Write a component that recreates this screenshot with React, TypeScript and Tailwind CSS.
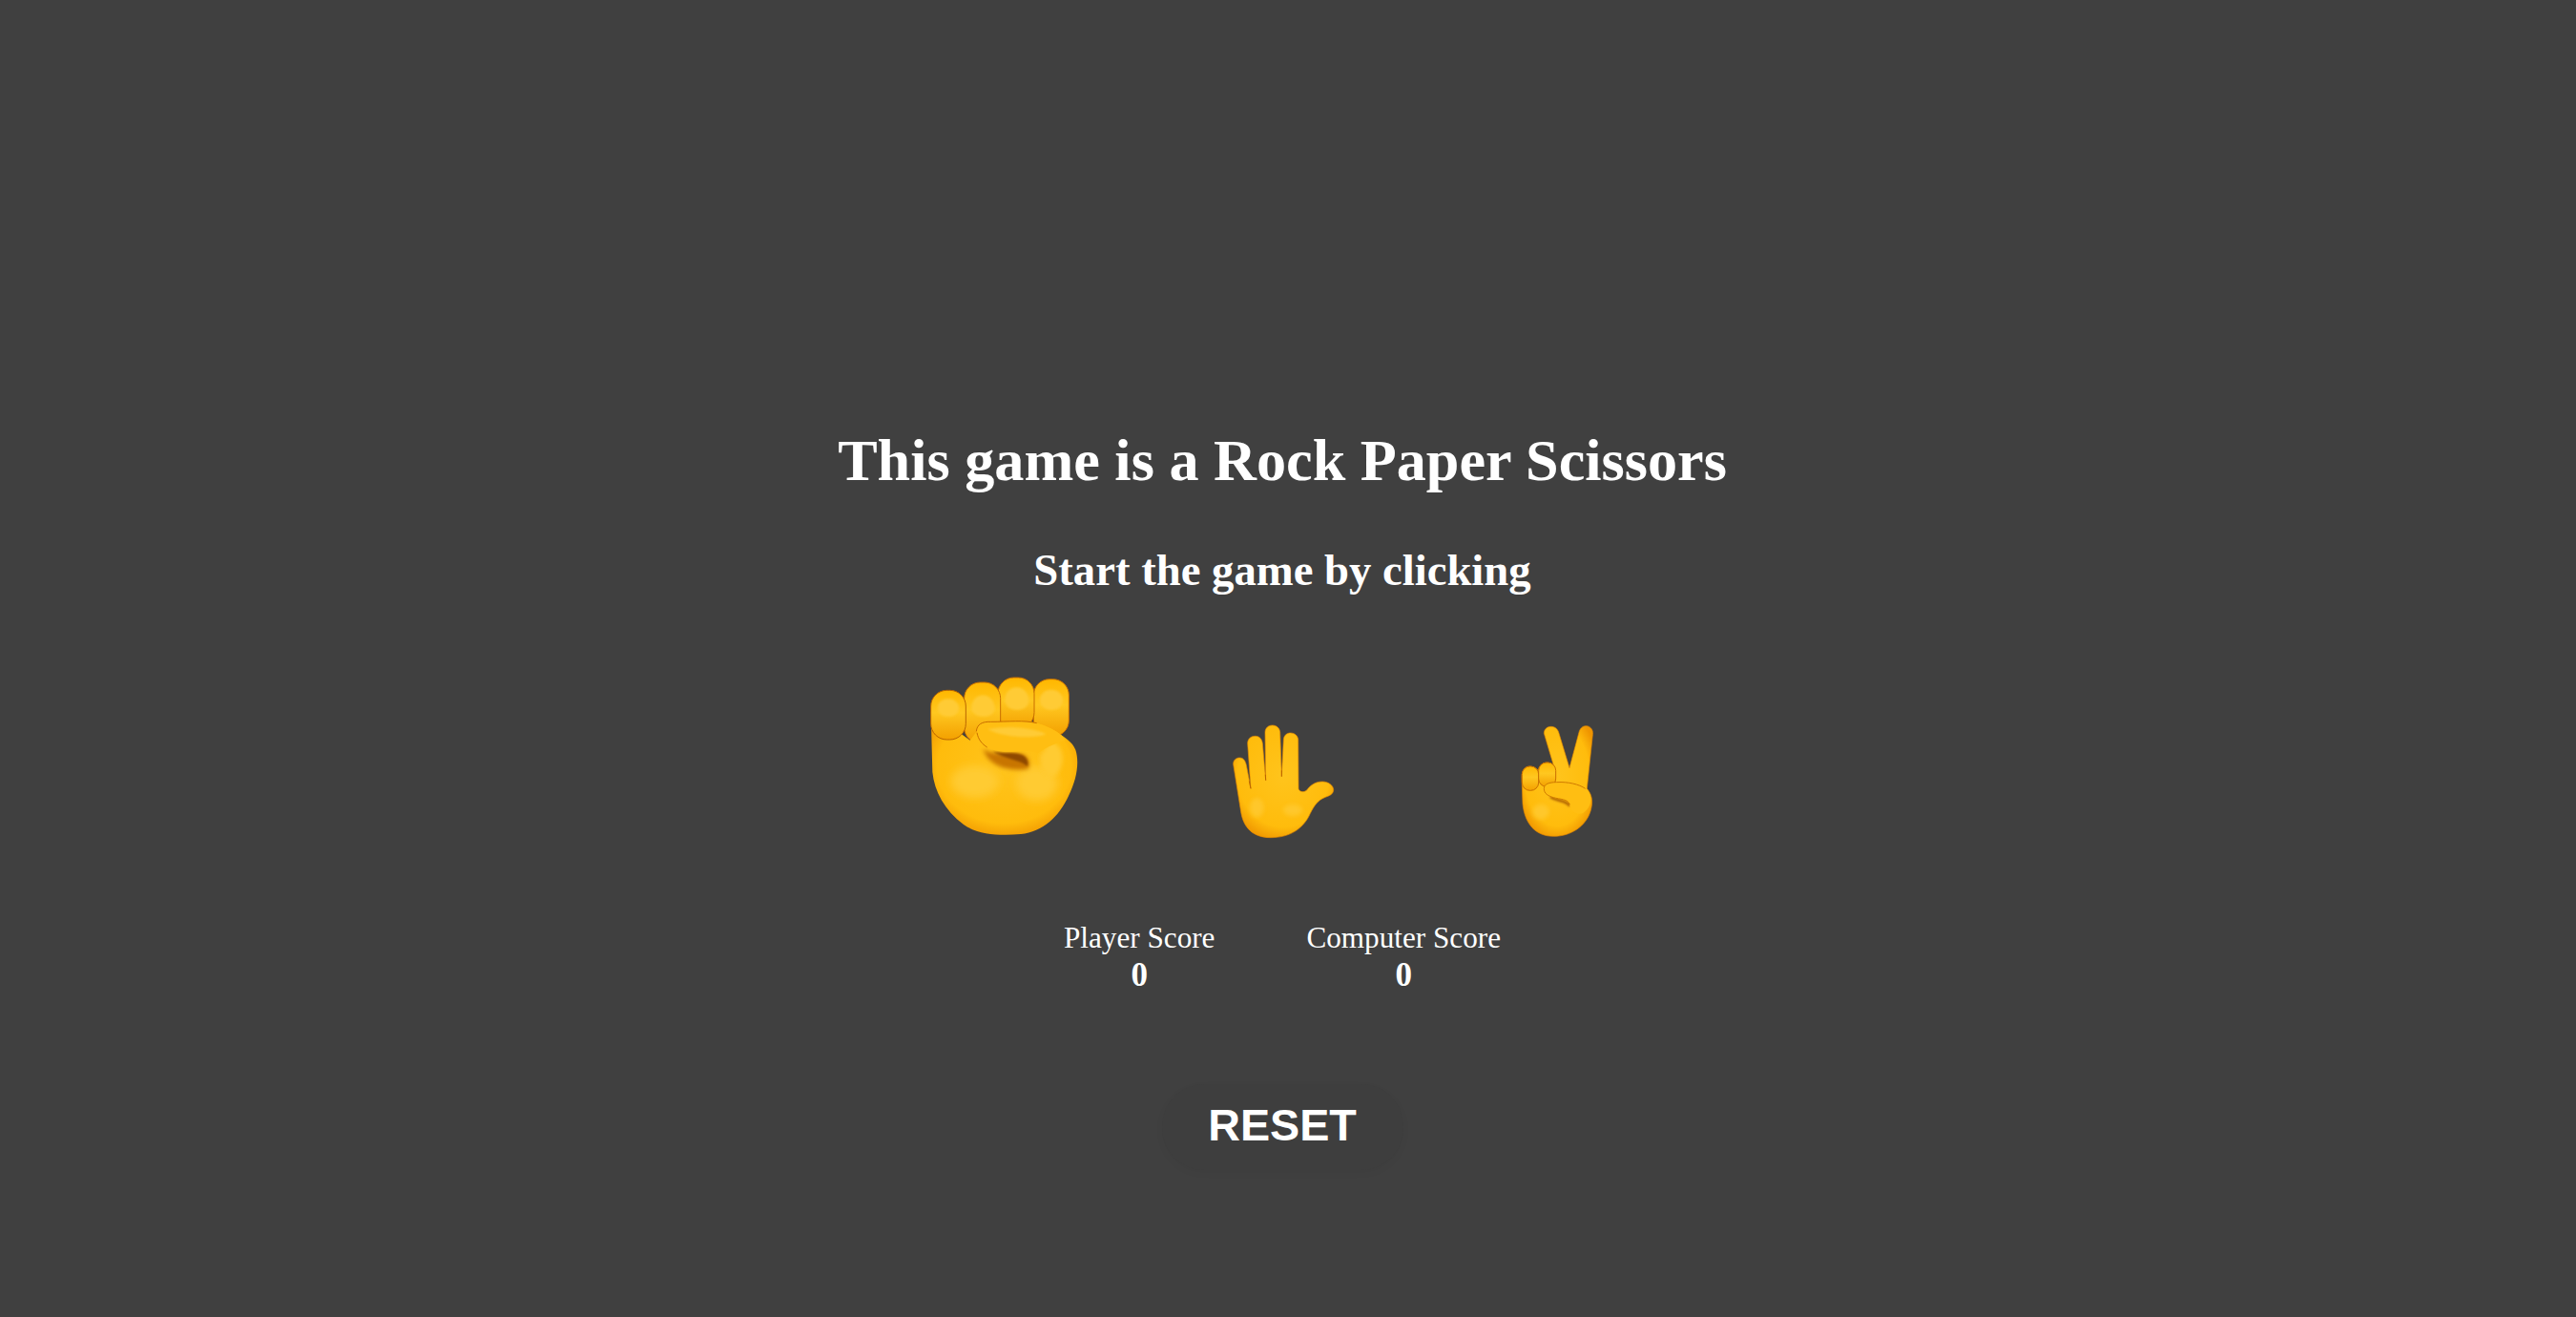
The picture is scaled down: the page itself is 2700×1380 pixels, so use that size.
const Defs = ({ id }: { id: string }) => (
  <defs>
    <radialGradient id={`${id}-skin`} cx="50%" cy="45%" r="60%">
      <stop offset="0%" stopColor="#ffc41c" />
      <stop offset="76%" stopColor="#ffbc0c" />
      <stop offset="100%" stopColor="#ef9500" />
    </radialGradient>
    <linearGradient id={`${id}-finger`} x1="0" y1="0" x2="0" y2="1">
      <stop offset="0%" stopColor="#ffb700" />
      <stop offset="45%" stopColor="#ffc720" />
      <stop offset="100%" stopColor="#f3a000" />
    </linearGradient>
    <filter id={`${id}-soft`} x="-40%" y="-40%" width="180%" height="180%">
      <feGaussianBlur stdDeviation="13" />
    </filter>
    <filter id={`${id}-mid`} x="-40%" y="-40%" width="180%" height="180%">
      <feGaussianBlur stdDeviation="7" />
    </filter>
    <filter id={`${id}-line`} x="-30%" y="-30%" width="160%" height="160%">
      <feGaussianBlur stdDeviation="3" />
    </filter>
  </defs>
);

const Fist = () => (
  <svg width="240" height="220" viewBox="0 0 720 660" className="shrink-0">
    <Defs id="fist" />
    <rect x="430" y="98" width="111" height="180" rx="50" fill="url(#fist-finger)" stroke="#c96f00" strokeWidth="3" />
    <rect x="318" y="93" width="114" height="160" rx="50" fill="url(#fist-finger)" stroke="#c96f00" strokeWidth="3" />
    <rect x="212" y="108" width="114" height="192" rx="50" fill="url(#fist-finger)" stroke="#c96f00" strokeWidth="3" />
    <path d="M340 165 C340 110 412 110 415 165 C415 205 342 205 340 165 Z" fill="#ffcb34" filter="url(#fist-line)" />
    <path d="M450 165 C450 120 520 120 522 165 C522 205 452 205 450 165 Z" fill="#ffcb34" filter="url(#fist-line)" />
    <path d="M235 190 C235 135 305 135 308 190 C308 225 238 225 235 190 Z" fill="#ffcb34" filter="url(#fist-line)" />
    <path
      d="M107 200 L112 390 C118 450 150 510 210 555 C250 585 320 592 390 585 C460 578 510 530 540 465 C565 415 575 360 562 320 C552 296 530 282 500 262 C470 245 440 232 400 232 L295 232 C268 232 252 245 252 262 L230 290 Z"
      fill="url(#fist-skin)"
    />
    <rect x="107" y="133" width="110" height="155" rx="50" fill="url(#fist-finger)" stroke="#b96400" strokeWidth="3" />
    <path d="M128 190 C128 150 195 150 195 190 C195 225 130 225 128 190 Z" fill="#ffcb34" filter="url(#fist-line)" />
    <ellipse cx="245" cy="420" rx="75" ry="50" fill="#ffcb30" filter="url(#fist-soft)" />
    <ellipse cx="440" cy="425" rx="65" ry="55" fill="#ffcb30" filter="url(#fist-soft)" />
    <path d="M485 290 C530 310 530 370 500 400 C470 420 450 380 450 340 Z" fill="#ffcb30" filter="url(#fist-mid)" />
    <path
      d="M270 318 C320 345 375 322 404 338 C420 350 418 372 412 380 C375 385 320 385 285 345 Z"
      fill="#c87400"
      filter="url(#fist-mid)"
    />
    <path d="M300 325 C340 335 380 325 400 340 C412 350 414 362 411 372 C390 352 340 350 300 325 Z" fill="#8f4a00" filter="url(#fist-line)" />
    <path
      d="M252 262 C252 240 268 231 295 232 C350 232 400 226 440 236 C480 246 520 270 530 290 C500 300 470 310 445 330 C430 325 415 323 400 323 C360 328 310 330 280 310 C262 298 252 282 252 262 Z"
      fill="#ffbe12"
    />
    <path d="M285 255 C340 245 410 245 470 270 C440 285 340 285 285 255 Z" fill="#ffcb34" filter="url(#fist-line)" />
    <path d="M250 262 C252 240 268 231 295 232 C350 232 400 226 440 236" fill="none" stroke="#c96f00" strokeWidth="3" />
    <path d="M252 266 C256 288 268 302 284 312" fill="none" stroke="#c96f00" strokeWidth="3" />
  </svg>
);

const Hand = () => (
  <svg width="160" height="150" viewBox="0 0 480 450" className="shrink-0">
    <Defs id="hand" />
    <path
      d="M98 185 C98 172 107 165 118 165 C130 165 136 175 139 188 L153 262 L143 120 C143 106 153 97 167 97 C180 97 188 106 190 120 L200 236 L198 85 C198 72 208 63 221 63 C234 63 244 72 245 85 L250 224 L256 108 C257 95 266 87 278 87 C291 87 301 96 302 108 L303 262 C305 272 318 275 328 268 C340 252 355 240 378 240 C398 240 413 253 413 266 C413 280 398 285 385 290 C365 298 352 315 340 340 C320 385 280 416 215 416 C160 416 130 385 122 335 Z"
      fill="url(#hand-skin)"
      stroke="#e58a00"
      strokeWidth="2"
    />
    <ellipse cx="172" cy="322" rx="22" ry="30" fill="#ffcb34" filter="url(#hand-mid)" opacity="0.75" />
    <ellipse cx="285" cy="330" rx="30" ry="18" fill="#ffcb34" filter="url(#hand-mid)" opacity="0.75" />
    <path d="M153 262 L148 238 M200 236 L199 218 M250 224 L250 205" stroke="#b96400" strokeWidth="3" />
  </svg>
);

const Peace = () => (
  <svg width="150" height="150" viewBox="0 0 450 450" className="shrink-0">
    <Defs id="peace" />
    <path
      d="M175 88 C175 75 185 67 197 67 C208 67 217 73 221 85 L255 197 L285 85 C288 72 297 65 307 65 C320 65 330 76 328 92 L310 262 C325 280 330 300 322 330 C308 380 260 412 205 412 C150 412 115 375 108 310 L105 225 C105 205 115 192 130 192 C142 192 150 198 157 205 C160 190 170 180 185 180 C195 180 202 184 206 192 Z"
      fill="url(#peace-skin)"
      stroke="#e58a00"
      strokeWidth="2"
    />
    <rect x="106" y="192" width="52" height="76" rx="25" fill="url(#peace-finger)" stroke="#c96f00" strokeWidth="3" />
    <rect x="158" y="180" width="54" height="76" rx="25" fill="url(#peace-finger)" stroke="#c96f00" strokeWidth="3" />
    <ellipse cx="165" cy="335" rx="26" ry="24" fill="#ffcb34" filter="url(#peace-mid)" opacity="0.75" />
    <path d="M195 288 C220 305 240 295 256 316" fill="none" stroke="#a85a00" strokeWidth="8" filter="url(#peace-line)" />
    <path
      d="M175 262 C175 248 190 242 215 242 C250 240 285 248 310 265 C328 285 328 320 296 340 C275 345 258 335 256 312 C250 294 225 296 205 290 C188 285 175 278 175 262 Z"
      fill="#ffbe12"
    />
    <path d="M175 262 C175 278 188 285 205 290 C225 296 250 294 256 312" fill="none" stroke="#cf7a00" strokeWidth="3" />
    <path d="M175 262 C175 248 190 242 215 242 C250 240 285 248 305 262" fill="none" stroke="#cf7a00" strokeWidth="3" />
  </svg>
);

const Score = ({ label }: { label: string }) => (
  <div className="flex flex-col items-center">
    <div className="text-[31.2px] leading-[37px]">{label}</div>
    <div className="text-[35px] leading-[41px] font-bold">0</div>
  </div>
);

export default function App() {
  return (
    <div className="h-screen overflow-hidden bg-[#404040] pr-3 pt-[445px] text-white font-['Liberation_Serif',serif]">
      <div className="flex flex-col items-center">
        <h1 className="text-[62.2px] leading-[74px] font-bold">This game is a Rock Paper Scissors</h1>
        <h2 className="mt-[51px] text-[46.7px] leading-[55px] font-bold">Start the game by clicking</h2>
        <div className="mt-[54px] flex items-end pr-[38px]">
          <Fist />
          <div className="mb-[10px] ml-20">
            <Hand />
          </div>
          <div className="mb-[10px] ml-[140px]">
            <Peace />
          </div>
        </div>
        <div className="mt-[65px] flex gap-24">
          <Score label="Player Score" />
          <Score label="Computer Score" />
        </div>
        <button className="mt-[94px] h-[90px] w-[253px] rounded-[44px] bg-[#3e3e3e] pb-1 text-[46.7px] font-bold font-['Liberation_Sans',sans-serif] shadow-[0_3px_8px_rgba(0,0,0,0.04)]">
          RESET
        </button>
      </div>
    </div>
  );
}
